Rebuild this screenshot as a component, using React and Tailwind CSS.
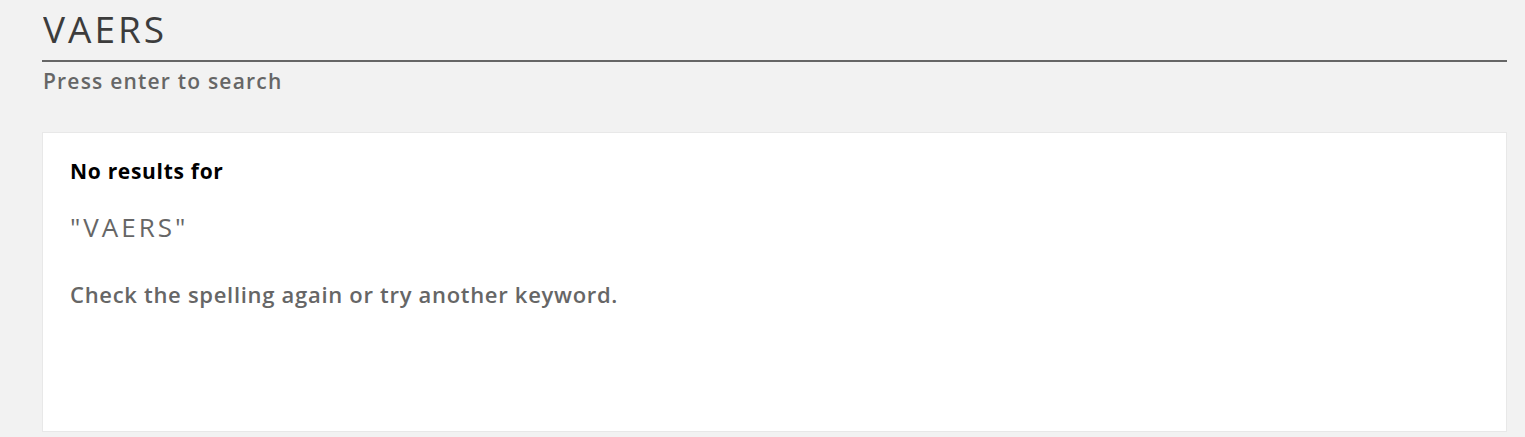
export default function App() {
  return (
    <div className="min-h-[437px] bg-[#f2f2f2] px-[42px] pt-[6px] pb-[5px] font-['Open_Sans',sans-serif]">
      <div className="w-[1465px]">
        <input
          readOnly
          value="VAERS"
          className="w-full bg-transparent border-b-2 border-[#666] pl-px pb-[8px] text-[37px] leading-[46px] tracking-[3px] text-[#3c3c3c] outline-none"
        />
        <p className="mt-[6px] pl-px text-[21px] font-semibold text-[#666] leading-[26px] tracking-[1.2px]">Press enter to search</p>

        <div className="mt-[38px] h-[300px] bg-white border border-[#e8e8e8] px-[27px] pt-[24px]">
          <h3 className="text-[21px] font-bold text-black leading-[28px] tracking-[0.7px]">No results for</h3>
          <p className="mt-[26px] text-[26px] text-[#666] leading-[32px] tracking-[3px]">"VAERS"</p>
          <p className="mt-[37px] text-[22px] font-semibold text-[#666] leading-[28px] tracking-[0.7px]">
            Check the spelling again or try another keyword.
          </p>
        </div>
      </div>
    </div>
  );
}
